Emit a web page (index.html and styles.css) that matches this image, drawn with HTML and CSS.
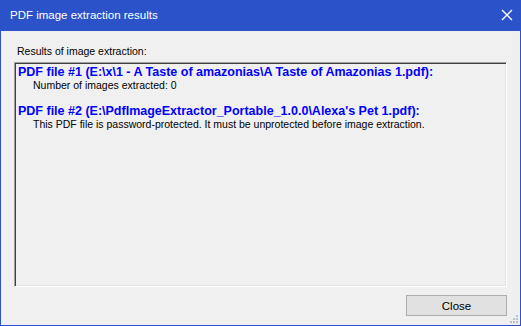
FILE: index.html
```html
<!DOCTYPE html>
<html>
<head>
    <title>PDF image extraction results</title>
    <meta charset="UTF-8">
    <link rel="stylesheet" href="styles.css">
</head>
<body>
    <div class="window">
        <div class="titlebar">
            <span class="title">PDF image extraction results</span>
            <span class="close">
                <svg width="12" height="12" viewBox="0 0 12 12">
                    <path d="M1 1 L11 11 M11 1 L1 11" stroke="#fff" stroke-width="1.3" fill="none"/>
                </svg>
            </span>
        </div>

        <div class="content">
            <div class="label">Results of image extraction:</div>

            <div class="results">
                <div class="file">PDF file #1 (E:\x\1 - A Taste of amazonias\A Taste of Amazonias 1.pdf):</div>
                <div class="detail">Number of images extracted: 0</div>
                <div class="blank"></div>
                <div class="file">PDF file #2 (E:\PdfImageExtractor_Portable_1.0.0\Alexa's Pet 1.pdf):</div>
                <div class="detail">This PDF file is password-protected. It must be unprotected before image extraction.</div>
            </div>

            <div class="footer">
                <button type="button" class="btn">Close</button>
            </div>

            <svg class="grip" width="8" height="8" viewBox="0 0 8 8">
                <rect x="6" y="0" width="2" height="2" fill="#b4c3c3"/>
                <rect x="3" y="3" width="2" height="2" fill="#b4c3c3"/>
                <rect x="6" y="3" width="2" height="2" fill="#b4c3c3"/>
                <rect x="0" y="6" width="2" height="2" fill="#b4c3c3"/>
                <rect x="3" y="6" width="2" height="2" fill="#b4c3c3"/>
                <rect x="6" y="6" width="2" height="2" fill="#b4c3c3"/>
            </svg>
        </div>
    </div>
</body>
</html>
```

FILE: styles.css
```css
html, body {
    margin: 0;
    padding: 0;
    background-color: #f0f0f0;
}

.window {
    width: 521px;
    height: 326px;
    box-sizing: border-box;
    border: 1px solid #2b52c9;
    border-top: none;
    display: flex;
    flex-direction: column;
    font-family: "Liberation Sans", Arial, sans-serif;
    font-size: 10.5px;
    color: #000;
}

.titlebar {
    height: 31px;
    margin: 0 -1px;
    background-color: #2b52c9;
    color: #fff;
    display: flex;
    align-items: center;
    justify-content: space-between;
    padding: 0 8px 0 10px;
}

.title {
    font-family: "Liberation Sans", Arial, sans-serif;
    font-size: 11.5px;
    margin-top: -1px;
}

.close {
    display: flex;
    margin-top: -1px;
}

.content {
    flex: 1;
    position: relative;
    display: flex;
    flex-direction: column;
    padding: 0 13px;
    background-color: #f0f0f0;
}

.label {
    margin: 14px 0 0 3px;
    height: 17px;
    line-height: 13px;
}

.results {
    height: 225px;
    box-sizing: border-box;
    border-top: 1px solid #a0a0a0;
    border-left: 1px solid #a0a0a0;
    border-right: 1px solid #ffffff;
    border-bottom: 1px solid #ffffff;
    box-shadow: inset 1px 1px 0 #404040, inset -1px -1px 0 #e3e3e3;
    padding: 3px 3px;
    line-height: 13px;
}

.file {
    color: #0000ff;
    font-weight: bold;
    font-size: 12.5px;
}

.detail {
    padding-left: 15px;
}

.blank {
    height: 13px;
}

.footer {
    display: flex;
    justify-content: flex-end;
    margin-top: 8px;
}

.btn {
    width: 101px;
    height: 21px;
    border: 1px solid #adadad;
    background-color: #e1e1e1;
    font-family: "Liberation Sans", Arial, sans-serif;
    font-size: 11.5px;
    color: #000;
    padding: 0;
}

.grip {
    position: absolute;
    right: 2px;
    bottom: 2px;
}
```
